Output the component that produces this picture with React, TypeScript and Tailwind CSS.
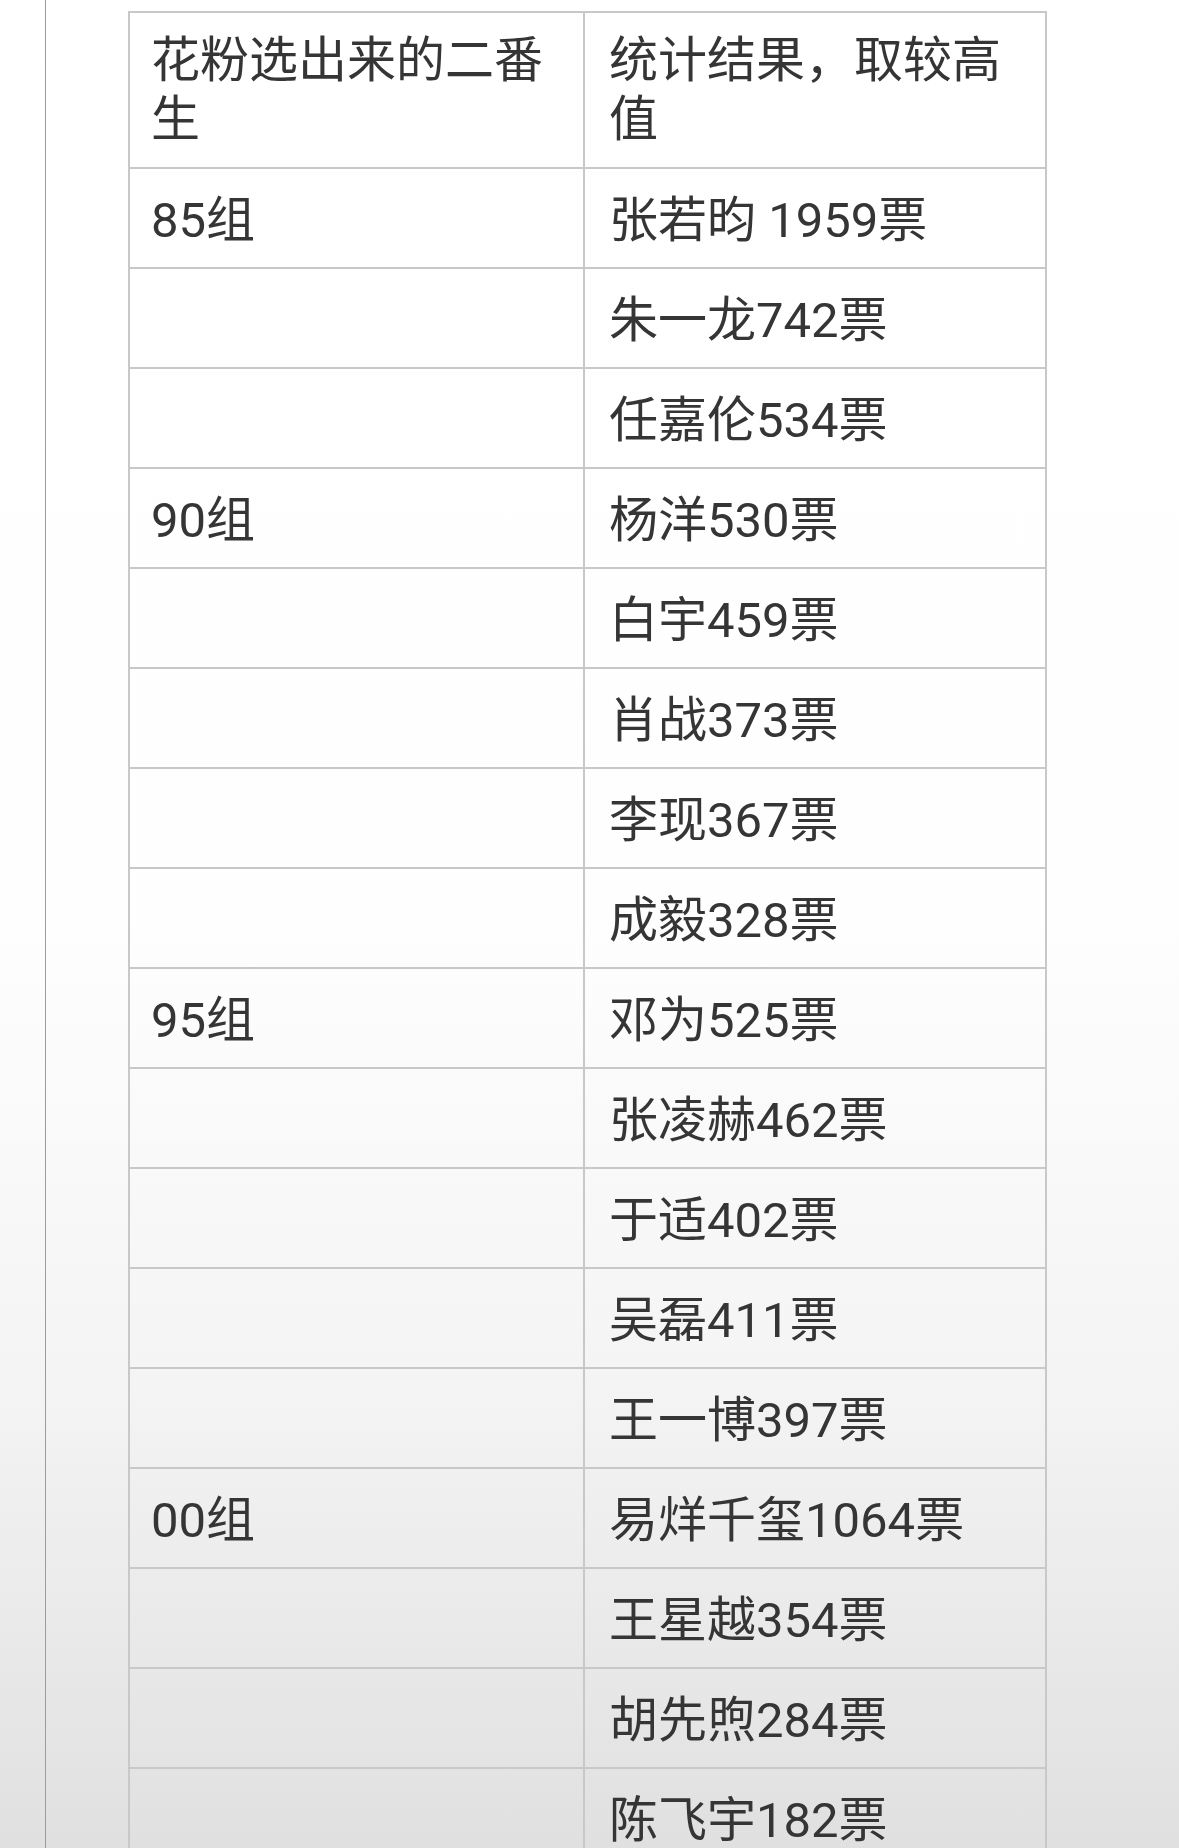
const rows: { group?: string; result: string }[] = [
  { group: "85组", result: "张若昀 1959票" },
  { result: "朱一龙742票" },
  { result: "任嘉伦534票" },
  { group: "90组", result: "杨洋530票" },
  { result: "白宇459票" },
  { result: "肖战373票" },
  { result: "李现367票" },
  { result: "成毅328票" },
  { group: "95组", result: "邓为525票" },
  { result: "张凌赫462票" },
  { result: "于适402票" },
  { result: "吴磊411票" },
  { result: "王一博397票" },
  { group: "00组", result: "易烊千玺1064票" },
  { result: "王星越354票" },
  { result: "胡先煦284票" },
  { result: "陈飞宇182票" },
];

const font = "font-['Roboto','Noto_Sans_CJK_SC',sans-serif]";

export default function App() {
  return (
    <div
      className={`h-[1848px] w-full overflow-hidden bg-[linear-gradient(180deg,#ffffff_0%,#fefefe_50%,#f4f4f4_75%,#e0e0e0_100%)] ${font} text-[#353535]`}
    >
      {/* page edge line on the left */}
      <div className="ml-[45px] h-full border-l border-[#9c9c9c] pl-[82px] pt-[11px]">
        <div className="grid w-[919px] grid-cols-[455px_462px] border-l-2 border-t-2 border-[#c8c8c8]">
          {/* header */}
          <div className="flex h-[156px] items-center border-b-2 border-r-2 border-[#c8c8c8] pl-[21px] pr-[18px] text-[49px] leading-[59px]">
            花粉选出来的二番生
          </div>
          <div className="flex h-[156px] items-center border-b-2 border-r-2 border-[#c8c8c8] pl-[24px] pr-[18px] text-[49px] leading-[59px]">
            统计结果，取较高值
          </div>

          {rows.map((row, i) => (
            <div key={i} className="contents">
              <div className="flex h-[100px] items-center border-b-2 border-r-2 border-[#c8c8c8] pl-[21px] pt-[4px] text-[49px] leading-[59px]">
                {row.group}
              </div>
              <div className="flex h-[100px] items-center border-b-2 border-r-2 border-[#c8c8c8] pl-[24px] pt-[4px] text-[49px] leading-[59px]">
                {row.result}
              </div>
            </div>
          ))}
        </div>
      </div>
    </div>
  );
}
